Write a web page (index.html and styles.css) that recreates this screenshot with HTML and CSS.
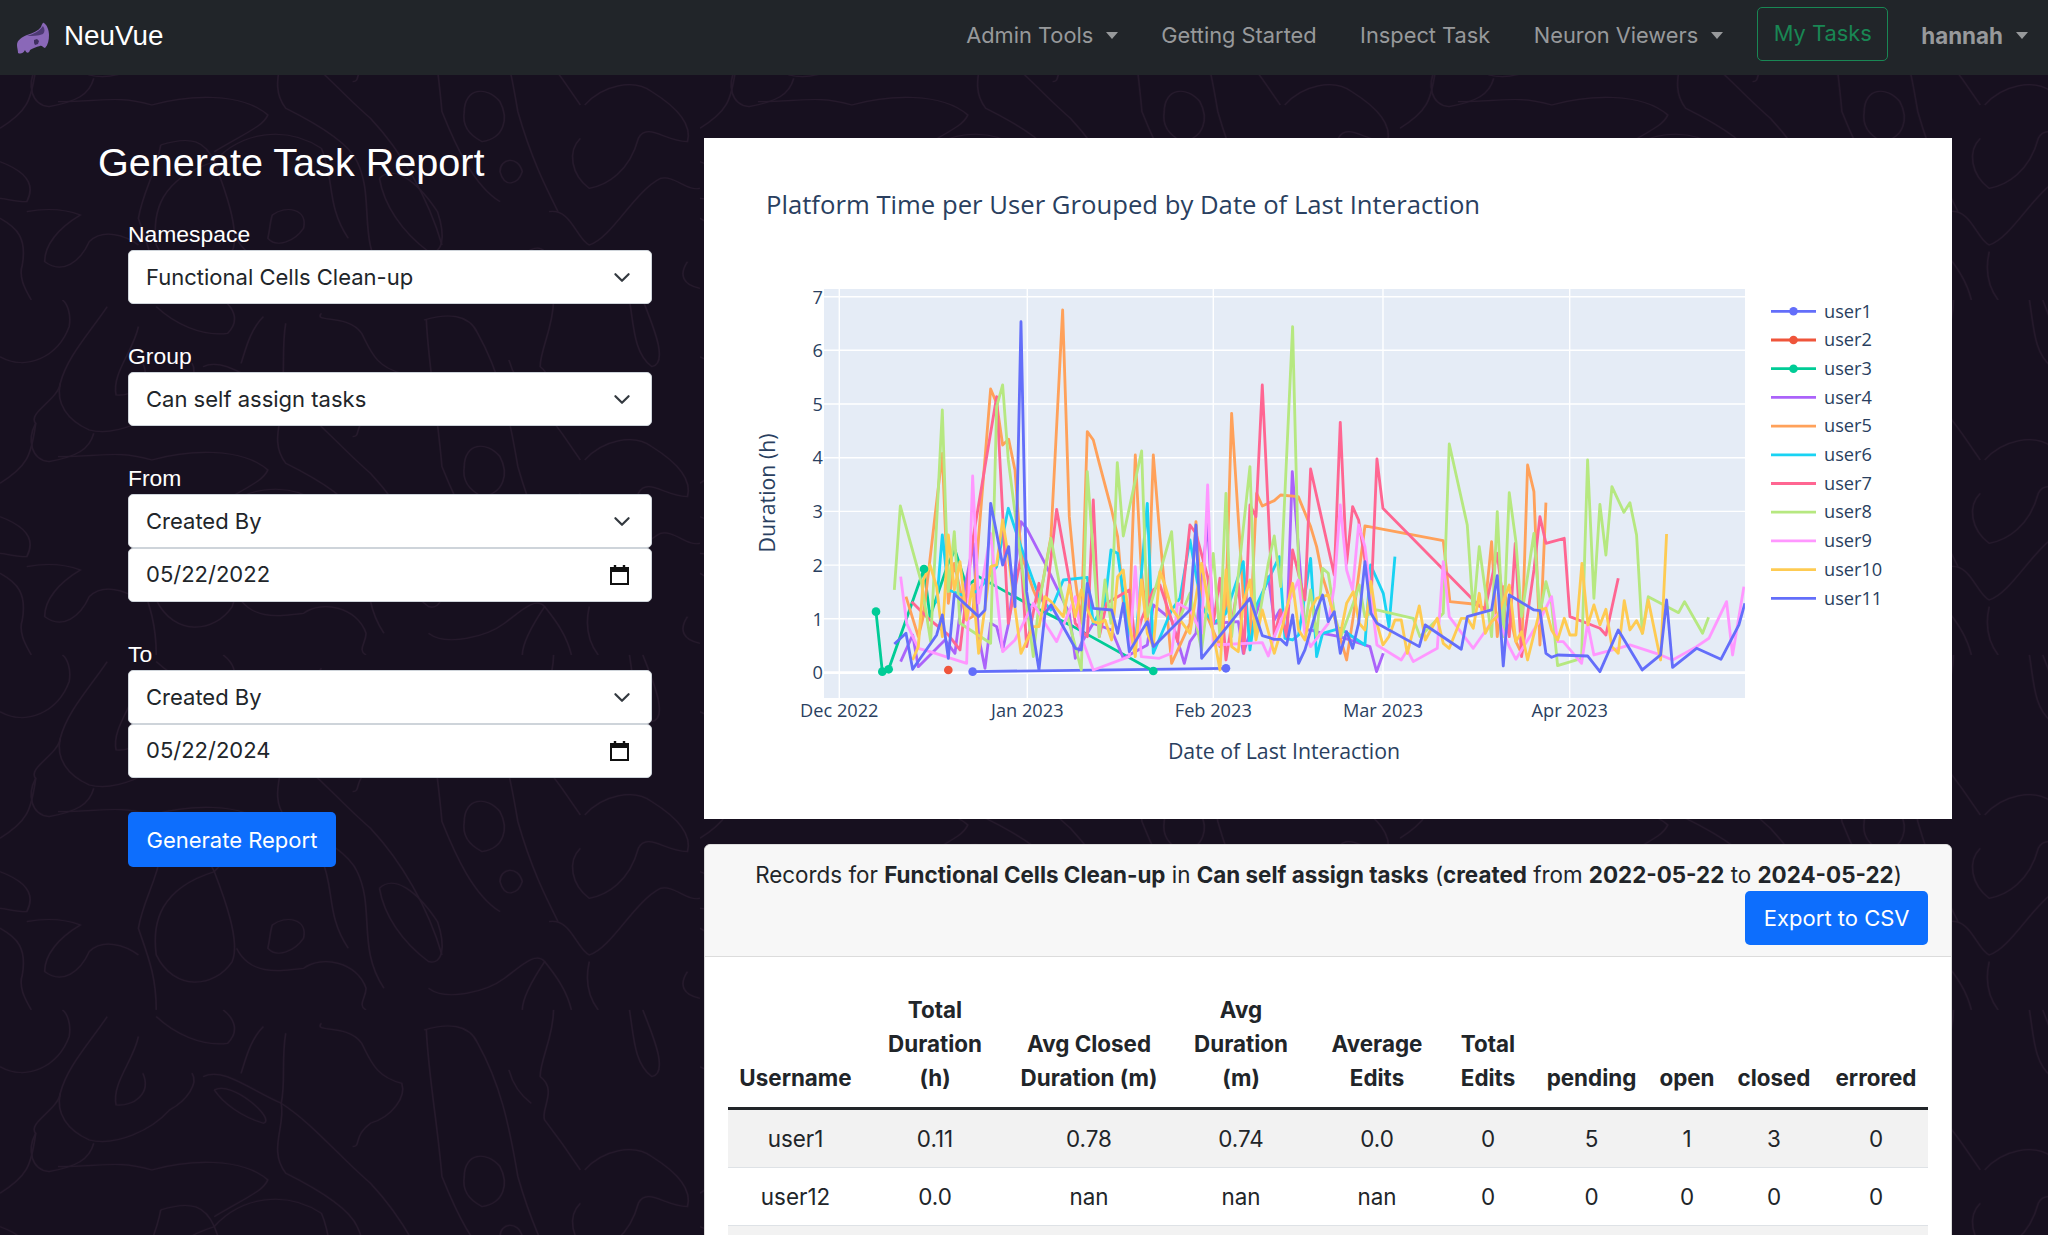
FILE: index.html
```html
<!DOCTYPE html>
<html lang="en">
<head>
    <meta charset="UTF-8">
    <title>NeuVue</title>
    <link rel="stylesheet" href="styles.css">
</head>
<body>
<!-- faint neuron drawing behind the page -->
<svg class="bg-art" width="2048" height="1235" aria-hidden="true">
    <defs>
        <pattern id="neurons" width="1568" height="1065" patternUnits="userSpaceOnUse" patternTransform="translate(0 -55) scale(.4464 .3333)">
            <g fill="none" stroke="#261a2c" stroke-width="3.5">
                <path d="M0 170C60 215 130 170 155 80 160 40 150 10 140 0"/>
                <path d="M240 20C200 100 150 170 135 250 125 310 150 360 200 390 260 410 340 360 380 300 420 270 445 220 430 190"/>
                <path d="M310 80C300 150 250 220 260 285 300 290 340 250 320 190"/>
                <path d="M350 20C390 70 450 110 510 100 540 60 520 20 500 0"/>
                <path d="M80 370C60 420 70 480 110 485 170 470 200 450 210 400"/>
                <path d="M0 550C60 500 70 470 80 370 60 340 130 300 135 250"/>
                <path d="M130 470C230 470 260 450 340 480 420 450 540 440 600 510 590 540 570 550 480 620"/>
                <path d="M455 200C500 170 560 240 630 280 640 350 600 420 640 490 700 530 780 590 800 650 840 760 800 880 860 1000"/>
                <path d="M480 240C520 210 620 330 590 340 540 320 500 280 480 240"/>
                <path d="M590 50C560 90 550 150 540 190M640 70C630 150 640 220 630 280"/>
                <path d="M720 40C700 70 780 40 810 100 830 150 840 200 900 220 910 260 880 320 830 340 790 380 810 410 790 410"/>
                <path d="M630 280C700 340 760 440 830 520 900 620 960 760 990 900"/>
                <path d="M950 60C1000 40 1050 40 1070 100 1120 220 1140 340 1160 500 1190 640 1220 720 1250 800"/>
                <path d="M955 60C960 200 980 340 990 500 1020 600 1060 720 1120 770"/>
                <path d="M1040 500C1040 430 1090 420 1120 470 1140 520 1130 580 1080 590 1050 570 1035 540 1040 500"/>
                <path d="M1120 680C1120 640 1160 630 1170 680 1160 720 1130 730 1120 680"/>
                <path d="M1240 0C1240 80 1210 150 1210 200 1250 240 1210 300 1220 330 1260 400 1290 460 1300 480"/>
                <path d="M1310 480C1350 420 1420 400 1460 440 1520 490 1550 540 1540 590 1490 590 1450 530 1430 580 1410 680 1360 720 1320 730 1280 690 1270 620 1300 580 1310 540 1310 480"/>
                <path d="M1410 0C1420 80 1420 160 1460 200 1500 190 1460 70 1440 0"/>
                <path d="M0 650C60 680 80 720 60 770 30 770 10 760 0 760"/>
                <path d="M360 600C430 570 460 590 480 650 360 700 340 800 350 900 390 1010 480 1000 520 920 540 860 500 720 480 650 540 560 640 540 720 610 750 700 730 780 780 880"/>
                <path d="M360 600C350 680 320 740 310 820 330 900 350 960 350 1065"/>
                <path d="M610 810C640 780 690 790 680 850 660 890 620 910 600 880 605 850 605 830 610 810"/>
                <path d="M60 800C100 790 140 790 180 810 130 850 100 900 100 950 140 990 180 950 200 890 230 850 280 870 310 900"/>
                <path d="M0 820C40 850 60 880 50 960 40 1000 60 1040 70 1065"/>
                <path d="M850 700C880 660 930 700 980 800 1000 880 990 930 960 920 900 860 860 780 850 700"/>
                <path d="M530 880C560 960 620 950 680 940 720 900 800 920 820 1000 820 1030 800 1050 820 1065"/>
                <path d="M1140 180C1150 230 1170 260 1190 280M1230 800C1280 790 1290 880 1320 900 1370 880 1420 740 1480 700 1510 690 1540 740 1568 730"/>
                <path d="M960 1000C1000 1040 1090 1010 1130 970 1170 930 1200 890 1220 920 1190 980 1170 1030 1170 1065"/>
                <path d="M1220 920C1250 970 1270 1010 1280 1065M1320 920C1310 980 1320 1030 1340 1065"/>
                <path d="M1540 950C1520 990 1530 1020 1568 1030"/>
            </g>
        </pattern>
    </defs>
    <rect width="2048" height="1235" fill="url(#neurons)"/>
</svg>

<nav class="navbar">
    <a class="brand" href="#">
        <svg class="brand-logo" width="34" height="34" viewBox="0 0 34 34">
            <path d="M1 24C1 19 6 16 11 14 17 12 22 10 25 6 26 3 27 1 28 2 31 4 33 9 33 14 33 19 32 24 29 27 27 27 26 24 24 25 20 26 17 27 14 29 13 33 10 32 9 29 7 33 4 33 2 32 2 29 1 27 1 24Z" fill="#8a68b8"/>
            <path d="M11 15C17 13 23 11 27 5 29 8 29 11 27 13 22 15 16 15 11 15Z" fill="#4d3a73"/>
            <path d="M18 19l3-1 2 2-1 3-3 1-1-2Z" fill="#3f2f5f"/>
        </svg>
        <span>NeuVue</span>
    </a>
    <ul class="nav-links">
        <li><a href="#" class="nav-link caret">Admin Tools</a></li>
        <li><a href="#" class="nav-link">Getting Started</a></li>
        <li><a href="#" class="nav-link">Inspect Task</a></li>
        <li><a href="#" class="nav-link caret">Neuron Viewers</a></li>
        <li><a href="#" class="btn-tasks">My Tasks</a></li>
        <li><a href="#" class="nav-link nav-user caret">hannah</a></li>
    </ul>
</nav>

<main class="page">
    <section class="side">
        <h2 class="side-title">Generate Task Report</h2>
        <form class="report-form">
            <div class="field">
                <label>Namespace</label>
                <select class="control"><option>Functional Cells Clean-up</option></select>
            </div>
            <div class="field">
                <label>Group</label>
                <select class="control"><option>Can self assign tasks</option></select>
            </div>
            <div class="field">
                <label>From</label>
                <select class="control"><option>Created By</option></select>
                <div class="control date">05/22/2022
                    <svg class="cal" width="19" height="20" viewBox="0 0 19 20"><path d="M5 0v3M14 0v3" stroke="#111" stroke-width="2.4"/><path d="M1 3h17v16H1Z" fill="none" stroke="#111" stroke-width="2"/><path d="M1 3h17v4H1Z" fill="#111"/></svg>
                </div>
            </div>
            <div class="field field-last">
                <label>To</label>
                <select class="control"><option>Created By</option></select>
                <div class="control date">05/22/2024
                    <svg class="cal" width="19" height="20" viewBox="0 0 19 20"><path d="M5 0v3M14 0v3" stroke="#111" stroke-width="2.4"/><path d="M1 3h17v16H1Z" fill="none" stroke="#111" stroke-width="2"/><path d="M1 3h17v4H1Z" fill="#111"/></svg>
                </div>
            </div>
            <button type="button" class="btn-primary">Generate Report</button>
        </form>
    </section>

    <section class="content">
        <div class="chart-card">
            <svg class="chart" width="1248" height="681" viewBox="704 138 1248 681">
                <defs>
                    <clipPath id="plotclip"><rect x="252" y="57" width="2763" height="1226"/></clipPath>
                </defs>
                <text class="chart-title" x="766" y="214">Platform Time per User Grouped by Date of Last Interaction</text>

                <rect x="824" y="289" width="921" height="409" fill="#e5ecf6"/>
                <g stroke="#fff" stroke-width="1.4">
                    <path d="M839.3 289V698M1027.3 289V698M1213.3 289V698M1383 289V698M1569.7 289V698"/>
                    <path d="M824 296.7H1745M824 350.3H1745M824 404H1745M824 457.7H1745M824 511.4H1745M824 565.1H1745M824 618.8H1745"/>
                    <path d="M824 672.7H1745" stroke-width="2.8"/>
                </g>

                <g class="tick" text-anchor="end">
                    <text x="823" y="303.5">7</text>
                    <text x="823" y="357">6</text>
                    <text x="823" y="410.7">5</text>
                    <text x="823" y="464.4">4</text>
                    <text x="823" y="518.1">3</text>
                    <text x="823" y="571.8">2</text>
                    <text x="823" y="625.5">1</text>
                    <text x="823" y="679.4">0</text>
                </g>
                <g class="tick" text-anchor="middle">
                    <text x="839.3" y="717">Dec 2022</text>
                    <text x="1027.3" y="717">Jan 2023</text>
                    <text x="1213.3" y="717">Feb 2023</text>
                    <text x="1383" y="717">Mar 2023</text>
                    <text x="1569.7" y="717">Apr 2023</text>
                </g>
                <text class="axis-title" x="1284" y="759" text-anchor="middle">Date of Last Interaction</text>
                <text class="axis-title" transform="translate(775 493) rotate(-90)" text-anchor="middle">Duration (h)</text>

                <!-- traces: points are in 3x coordinates, one group so they stay readable -->
                <g transform="translate(740 270) scale(.3333)" clip-path="url(#plotclip)" fill="none" stroke-width="8.5" stroke-linejoin="round">
                    <polyline stroke="#636efa" points="698,1205 1458,1195"/>
                    <polyline stroke="#00cc96" points="408,1025 427,1205 446,1198 552,897 570,1040 625,880 645,840 680,950 716,920 860,1000 1000,1070 1240,1203"/>
                    <polyline stroke="#ab63fa" points="482,1175 518,1095 535,1190 615,1110 645,1150 660,1030 700,820 716,1100 735,1195 752,1060 770,1070 788,1140 806,1060 843,755 860,775 915,880 988,1030 1006,1165 1024,1120 1060,1060 1115,1080 1150,1165 1222,1125 1240,1005 1295,1050 1333,1180 1350,1115 1368,1090 1403,760 1420,1060 1495,1055 1510,1150 1585,920 1603,1050 1620,1020 1640,1100 1657,605 1676,840 1695,1080 1712,1080 1748,1090 1800,1100 1890,1130 1910,1205 1930,1150"/>
                    <polyline stroke="#ffa15a" points="498,980 535,1100 550,1040 607,550 625,1000 643,880 680,1050 698,1040 716,800 752,357 770,400 788,525 806,508 825,600 843,850 880,960 897,1000 933,800 968,120 988,740 1006,930 1024,1060 1042,485 1060,510 1078,580 1115,720 1133,800 1150,1000 1168,1060 1186,555 1204,900 1222,1070 1240,555 1260,800 1295,1180 1350,1060 1368,755 1385,1000 1440,1130 1458,1000 1475,430 1510,980 1530,1100 1550,670 1567,708 1603,692 1622,675 1675,680 1712,770 1730,830 1748,920 1765,975 1783,1040 1820,1170 1840,1040 1875,768 2110,812 2130,995 2200,1002 2235,1015 2255,815 2272,1100 2290,950 2328,1115 2345,1150 2363,585 2382,665 2400,1125 2418,698"/>
                    <polyline stroke="#19d3f3" points="590,1000 607,795 625,960 680,980 716,960 770,890 805,715 843,830 897,980 933,1020 970,930 1042,922 1060,1060 1095,1000 1113,840 1133,850 1168,1100 1186,1130 1222,700 1240,1150 1295,1020 1320,985 1350,810 1385,1010 1420,1060 1458,1030 1510,875 1530,1140 1548,1010 1585,930 1618,860 1635,1105 1658,1110 1676,1095 1712,865 1730,1160 1748,1090 1800,1075 1875,1125 1892,885 1930,970 1947,1070 1965,860"/>
                    <polyline stroke="#ff6692" points="515,995 570,1050 625,1095 660,1140 700,800 770,380 805,1060 843,860 860,1130 897,940 915,1020 950,718 988,930 1006,1060 1042,1100 1060,690 1078,1100 1100,1000 1168,960 1186,1120 1204,1050 1240,960 1260,945 1295,1050 1313,1115 1350,765 1368,790 1403,920 1420,1060 1440,925 1458,1170 1495,940 1512,1150 1530,705 1548,740 1567,345 1603,1100 1622,1020 1640,1100 1658,840 1695,990 1712,597 1783,915 1801,457 1820,880 1838,710 1856,750 1875,870 1893,1000 1911,567 1929,715 2200,990 2235,1020 2272,850 2290,1000 2308,1100 2326,820 2345,1160 2382,900 2400,740 2418,820 2473,805 2490,1040 2580,1075 2598,1095 2635,925"/>
                    <polyline stroke="#b6e880" points="463,960 481,708 545,940 572,1115 607,420 625,965 643,785 660,1060 752,1120 770,410 788,345 805,570 880,1160 897,1000 933,805 960,950 1024,1200 1042,605 1078,1100 1095,930 1113,1060 1132,578 1150,798 1205,543 1222,1040 1295,785 1313,1060 1350,970 1385,1140 1420,850 1440,1100 1458,670 1475,1100 1530,590 1548,1100 1585,880 1603,798 1622,950 1658,170 1676,900 1695,1070 1712,960 1730,1100 1748,895 1765,910 1785,1040 1803,1100 1840,1000 1858,945 1875,1040 1910,1020 2020,1045 2040,1100 2110,1030 2128,522 2182,765 2200,1030 2218,830 2255,1100 2272,725 2290,1100 2308,668 2328,815 2345,1040 2382,790 2400,1030 2418,935 2435,1000 2453,1187 2525,1165 2543,570 2562,985 2580,703 2598,855 2616,650 2652,727 2670,698 2690,795 2707,1090 2725,980 2816,1028 2834,995 2888,1090 2906,1042"/>
                    <polyline stroke="#ff97ff" points="482,920 500,1060 535,1135 570,1145 680,1180 698,618 716,1000 752,790 788,1145 825,1110 880,1000 915,1060 950,1115 1006,980 1024,1100 1060,1200 1168,1160 1186,890 1204,1160 1258,1165 1295,1150 1313,1000 1350,1020 1385,1090 1403,645 1420,1125 1567,1118 1585,1158 1603,1100 1675,930 1695,1090 1712,1130 1765,1060 1783,950 1801,705 1820,900 1838,960 1856,765 1875,830 1911,1125 1984,1170 2002,1140 2020,1175 2092,1135 2110,875 2128,1040 2200,1135 2270,1035 2308,1130 2328,1168 2400,1050 2435,980 2453,1115 2470,1115 2525,1180 2543,1060 2562,1155 2635,1135 2670,1125 2762,1155 2798,1170 2870,1130 2907,1105 2960,995 2978,1155 3012,950"/>
                    <polyline stroke="#fecb52" points="518,1170 535,1130 550,930 570,885 590,950 607,1100 625,795 643,960 660,875 680,1050 698,945 716,1150 752,890 770,885 788,750 805,860 843,1150 880,1070 897,1070 915,980 933,995 970,1040 988,945 1006,1040 1024,960 1042,1020 1060,1055 1078,1060 1095,1050 1115,1110 1133,920 1150,900 1168,1060 1186,1160 1204,930 1222,1090 1240,1130 1260,905 1275,945 1295,1015 1313,1040 1350,1090 1385,880 1420,1090 1440,1200 1458,900 1475,1130 1495,1145 1510,1000 1530,930 1548,1110 1567,1020 1603,1150 1630,1060 1658,940 1676,1080 1695,1110 1712,1020 1730,985 1765,975 1783,1040 1800,1100 1820,1000 1840,965 1858,1060 1875,1080 1893,935 1911,1060 1929,1125 1947,1100 1965,1050 1984,1050 2002,1150 2038,1008 2056,1110 2092,1045 2110,1120 2128,1135 2164,1045 2182,1045 2200,1075 2218,970 2236,1090 2255,1055 2272,1040 2308,945 2328,1115 2345,1085 2363,1170 2400,1020 2418,1015 2435,1080 2453,1110 2473,1045 2490,1095 2508,1095 2526,880 2544,1065 2562,1005 2580,1065 2598,1018 2616,1130 2635,1150 2653,992 2670,1080 2690,1052 2708,1090 2725,990 2762,1170 2780,792"/>
                    <polyline stroke="#636efa" points="463,1122 498,1090 518,1198 590,1095 607,1035 625,1165 643,972 716,1040 735,1020 752,700 770,790 788,885 806,830 825,1010 843,155 860,965 897,1200 915,1030 933,1005 1006,1135 1024,1140 1042,940 1060,1015 1115,1020 1133,1090 1150,1000 1168,1145 1222,1055 1240,1130 1350,1020 1368,765 1385,1165 1530,985 1567,1097 1603,1108 1622,1108 1640,1125 1658,1035 1676,1180 1695,1140 1730,1020 1748,975 1765,1055 1783,1025 1801,1150 1820,1085 1838,1135 1856,1060 1875,875 1893,1030 1911,1060 2038,1130 2056,1065 2164,1138 2182,1040 2255,1020 2272,917 2290,1188 2308,975 2382,1020 2400,1022 2418,1150 2435,1162 2453,1155 2543,1158 2580,1205 2635,1080 2707,1200 2762,1155 2780,990 2798,1192 2870,1135 2943,1168 2997,1065 3015,1000"/>
                    <g stroke="none">
                        <g fill="#636efa"><circle cx="698" cy="1205" r="13"/><circle cx="1458" cy="1195" r="13"/></g>
                        <circle cx="625" cy="1200" r="13" fill="#ef553b"/>
                        <g fill="#00cc96"><circle cx="408" cy="1025" r="13"/><circle cx="427" cy="1205" r="13"/><circle cx="446" cy="1198" r="13"/><circle cx="552" cy="897" r="13"/><circle cx="1240" cy="1203" r="13"/></g>
                    </g>
                </g>

                <!-- legend -->
                <g fill="none" stroke-width="2.8">
                    <path d="M1771 311.3h45" stroke="#636efa"/>
                    <path d="M1771 340h45" stroke="#ef553b"/>
                    <path d="M1771 368.7h45" stroke="#00cc96"/>
                    <path d="M1771 397.4h45" stroke="#ab63fa"/>
                    <path d="M1771 426.1h45" stroke="#ffa15a"/>
                    <path d="M1771 454.8h45" stroke="#19d3f3"/>
                    <path d="M1771 483.5h45" stroke="#ff6692"/>
                    <path d="M1771 512.2h45" stroke="#b6e880"/>
                    <path d="M1771 540.9h45" stroke="#ff97ff"/>
                    <path d="M1771 569.6h45" stroke="#fecb52"/>
                    <path d="M1771 598.3h45" stroke="#636efa"/>
                </g>
                <circle cx="1793.5" cy="311.3" r="4.3" fill="#636efa"/>
                <circle cx="1793.5" cy="340" r="4.3" fill="#ef553b"/>
                <circle cx="1793.5" cy="368.7" r="4.3" fill="#00cc96"/>
                <g class="tick">
                    <text x="1824" y="317.5">user1</text>
                    <text x="1824" y="346.2">user2</text>
                    <text x="1824" y="374.9">user3</text>
                    <text x="1824" y="403.6">user4</text>
                    <text x="1824" y="432.3">user5</text>
                    <text x="1824" y="461">user6</text>
                    <text x="1824" y="489.7">user7</text>
                    <text x="1824" y="518.4">user8</text>
                    <text x="1824" y="547.1">user9</text>
                    <text x="1824" y="575.8">user10</text>
                    <text x="1824" y="604.5">user11</text>
                </g>
            </svg>
        </div>

        <div class="records-card">
            <div class="records-header">
                <div class="records-text">Records for <b>Functional Cells Clean-up</b> in <b>Can self assign tasks</b> (<b>created</b> from <b>2022-05-22</b> to <b>2024-05-22</b>)</div>
                <div class="records-actions"><button type="button" class="btn-primary btn-export">Export to CSV</button></div>
            </div>
            <div class="records-body">
                <table class="records-table">
                    <colgroup>
                        <col class="c-user"><col class="c-total"><col class="c-closed"><col class="c-avg"><col class="c-edits">
                        <col class="c-tedits"><col class="c-pending"><col class="c-open"><col class="c-cl"><col class="c-err">
                    </colgroup>
                    <thead>
                        <tr>
                            <th>Username</th><th>Total<br>Duration<br>(h)</th><th>Avg Closed<br>Duration (m)</th><th>Avg<br>Duration<br>(m)</th><th>Average<br>Edits</th>
                            <th>Total<br>Edits</th><th>pending</th><th>open</th><th>closed</th><th>errored</th>
                        </tr>
                    </thead>
                    <tbody>
                        <tr><td>user1</td><td>0.11</td><td>0.78</td><td>0.74</td><td>0.0</td><td>0</td><td>5</td><td>1</td><td>3</td><td>0</td></tr>
                        <tr><td>user12</td><td>0.0</td><td>nan</td><td>nan</td><td>nan</td><td>0</td><td>0</td><td>0</td><td>0</td><td>0</td></tr>
                        <tr><td></td><td></td><td></td><td></td><td></td><td></td><td></td><td></td><td></td><td></td></tr>
                    </tbody>
                </table>
            </div>
        </div>
    </section>
</main>
</body>
</html>
```

FILE: styles.css
```css
html, body {
    margin: 0;
    height: 1235px;
    overflow: hidden;
}
body {
    position: relative;
    background: #17101f;
    color: #fff;
    font-family: Inter, "Noto Sans", sans-serif;
    font-size: 22.4px;
    line-height: 33.3px;
}
.bg-art {
    position: absolute;
    top: 0;
    left: 0;
    z-index: -1;
}

/* navbar */
.navbar {
    height: 75px;
    box-sizing: border-box;
    background: #212529;
    display: flex;
    align-items: center;
    justify-content: space-between;
    padding: 0 20px 7px 16px;
}
.brand {
    display: flex;
    align-items: center;
    gap: 14px;
    padding-top: 3px;
    color: #fff;
    text-decoration: none;
    font-family: "Liberation Sans", Arial, sans-serif;
    font-size: 27.8px;
}
.brand-logo {
    margin-top: 4px;
}
.nav-links {
    display: flex;
    align-items: center;
    list-style: none;
    margin: 0;
    padding: 0;
    font-size: 21.8px;
}
.nav-link {
    display: flex;
    align-items: center;
    padding-top: 3px;
    color: #97999b;
    text-decoration: none;
    margin-right: 43.5px;
}
.nav-link.caret {
    margin-right: 43px;
}
.nav-link.caret:after {
    content: "";
    margin-left: 13px;
    border-top: 7px solid #97999b;
    border-left: 6.5px solid transparent;
    border-right: 6.5px solid transparent;
}
li:nth-child(4) .nav-link {
    margin-right: 34px;
}
.btn-tasks {
    display: block;
    width: 131px;
    height: 54px;
    box-sizing: border-box;
    border: 1px solid #198754;
    border-radius: 5px;
    color: #198754;
    text-align: center;
    line-height: 51px;
    text-decoration: none;
    margin-right: 33px;
}
.nav-user {
    font-size: 22.4px;
    font-weight: 700;
    margin-right: 0 !important;
}

/* page */
.page {
    display: flex;
    padding: 63px 0 0 98px;
}
.side {
    width: 554px;
    margin-right: 52px;
    flex: none;
}
.side-title {
    margin: 0 0 37px;
    font-family: "Liberation Sans", Arial, sans-serif;
    font-size: 39.6px;
    font-weight: 400;
    line-height: 48px;
}
.report-form {
    margin-left: 30px;
    width: 524px;
}
.field {
    margin-bottom: 41px;
}
.field-last {
    margin-bottom: 34px;
}
.field label {
    display: block;
    font-family: "Liberation Sans", Arial, sans-serif;
    font-size: 22.9px;
    line-height: 22px;
    height: 27px;
}
.control {
    display: block;
    width: 100%;
    height: 54px;
    box-sizing: border-box;
    margin: 0;
    padding: 0 17px;
    border: 1px solid #ced4da;
    border-radius: 5px;
    background-color: #fff;
    color: #212529;
    font-family: Inter, "Noto Sans", sans-serif;
    font-size: 22px;
    appearance: none;
    -webkit-appearance: none;
}
select.control {
    background-image: url("data:image/svg+xml,%3Csvg xmlns='http://www.w3.org/2000/svg' viewBox='0 0 16 10'%3E%3Cpath fill='none' stroke='%23343a40' stroke-width='2' stroke-linecap='round' stroke-linejoin='round' d='M2 2l6 6 6-6'/%3E%3C/svg%3E");
    background-repeat: no-repeat;
    background-position: right 20px center;
    background-size: 18px 11px;
}
.date {
    display: flex;
    align-items: center;
    justify-content: space-between;
    padding-right: 22px;
}
.btn-primary {
    display: block;
    height: 55px;
    padding: 0 18.5px;
    border: 0;
    border-radius: 5px;
    background: #0d6efd;
    color: #fff;
    font-family: Inter, "Noto Sans", sans-serif;
    font-size: 22px;
}

/* chart */
.content {
    width: 1248px;
    flex: none;
}
.chart-card {
    background: #fff;
    height: 681px;
    margin-bottom: 25px;
}
.chart {
    display: block;
}
.chart text {
    font-family: "Open Sans", "Noto Sans", sans-serif;
    fill: #2a3f5f;
}
.chart .chart-title {
    font-size: 25.7px;
}
.chart .tick text {
    font-size: 18.2px;
}
.chart .axis-title {
    font-size: 21.3px;
}

/* records */
.records-card {
    background: #fff;
    border: 1px solid #dcdcdc;
    border-radius: 6px 6px 0 0;
    color: #212529;
}
.records-header {
    background: #f7f7f7;
    border-bottom: 1px solid #dcdcdc;
    padding: 13px 23px 11px 24px;
    height: 112px;
    box-sizing: border-box;
    border-radius: 6px 6px 0 0;
}
.records-text {
    text-align: center;
}
.records-actions {
    display: flex;
    justify-content: flex-end;
}
.btn-export {
    height: 54px;
}
.records-body {
    padding: 29px 23px 0;
}
.records-table {
    width: 1200px;
    table-layout: fixed;
    border-collapse: collapse;
}
.c-user { width: 135px; }
.c-total { width: 144px; }
.c-closed { width: 164px; }
.c-avg { width: 140px; }
.c-edits { width: 132px; }
.c-tedits { width: 90px; }
.c-pending { width: 117px; }
.c-open { width: 74px; }
.c-cl { width: 100px; }
.c-err { width: 104px; }
.records-table th,
.records-table td {
    text-align: center;
    vertical-align: bottom;
    padding: 0 8px;
}
.records-table th {
    padding-top: 7px;
    padding-bottom: 12px;
    line-height: 34px;
    border-bottom: 3px solid #212529;
}
.records-table td {
    height: 57px;
    vertical-align: middle;
    border-bottom: 1px solid #dee2e6;
}
.records-table tbody tr:nth-child(odd) td {
    background: #f2f2f2;
}
```
